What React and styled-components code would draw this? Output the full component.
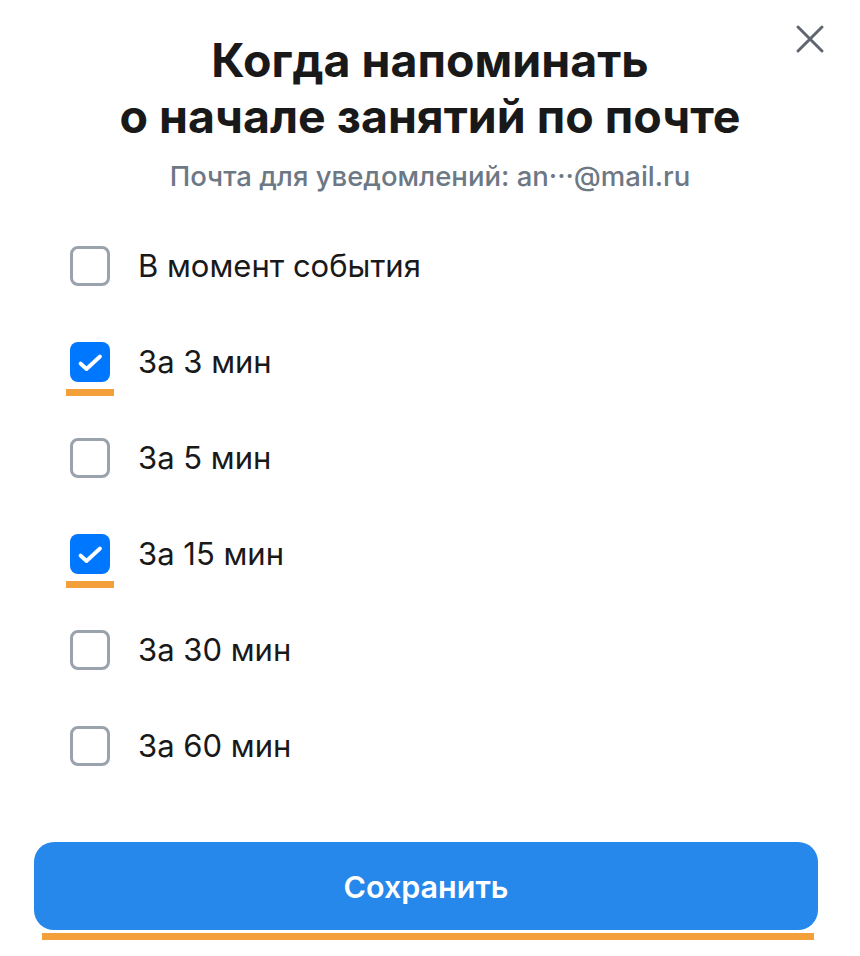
import styled, { createGlobalStyle } from 'styled-components';

const GlobalStyle = createGlobalStyle`
  html, body {
    margin: 0;
    padding: 0;
    background: #ffffff;
  }
  body {
    font-family: Inter, "Noto Sans", Roboto, sans-serif;
    -webkit-font-smoothing: antialiased;
  }
`;

const options = [
  { label: 'В момент события', checked: false },
  { label: 'За 3 мин', checked: true },
  { label: 'За 5 мин', checked: false },
  { label: 'За 15 мин', checked: true },
  { label: 'За 30 мин', checked: false },
  { label: 'За 60 мин', checked: false },
];

const CheckIcon = () => (
  <svg width="40" height="40" viewBox="0 0 40 40" fill="none">
    <path d="M10.5 21.5l6 5.5L30 14.5" stroke="#ffffff" strokeWidth="3.8" strokeLinecap="round" strokeLinejoin="round" />
  </svg>
);

const CloseIcon = () => (
  <svg width="30" height="30" viewBox="0 0 30 30" fill="none">
    <path d="M3 3l24 24M27 3L3 27" stroke="#5f6670" strokeWidth="3" strokeLinecap="round" />
  </svg>
);

export default function App() {
  return (
    <>
      <GlobalStyle />
      <Modal>
        <CloseButton aria-label="Закрыть">
          <CloseIcon />
        </CloseButton>
        <Header>
          <Title>
            Когда напоминать
            <br />
            о начале занятий по почте
          </Title>
          <Subtitle>Почта для уведомлений: an···@mail.ru</Subtitle>
        </Header>
        <OptionList>
          {options.map((o) => (
            <Option key={o.label}>
              <BoxWrap>
                <Box $checked={o.checked}>{o.checked && <CheckIcon />}</Box>
                {o.checked && <Underline $width={48} />}
              </BoxWrap>
              <Label>{o.label}</Label>
            </Option>
          ))}
        </OptionList>
        <Footer>
          <SaveButton>Сохранить</SaveButton>
          <Underline $width={772} $shift={4} />
        </Footer>
      </Modal>
    </>
  );
}

const Modal = styled.div`
  position: relative;
  width: 860px;
  height: 956px;
  box-sizing: border-box;
  padding: 32px 42px 0 34px;
  display: flex;
  flex-direction: column;
`;

const CloseButton = styled.button`
  position: absolute;
  top: 24px;
  right: 35px;
  padding: 0;
  border: none;
  background: none;
  display: flex;
`;

const Header = styled.div`
  display: flex;
  flex-direction: column;
  align-items: center;
  padding-left: 8px;
`;

const Title = styled.h1`
  margin: 0;
  font-size: 46.5px;
  line-height: 56px;
  font-weight: 700;
  letter-spacing: 0;
  color: #19191a;
  text-align: center;
`;

const Subtitle = styled.div`
  margin-top: 16px;
  font-size: 27.5px;
  line-height: 32px;
  font-weight: 500;
  color: #6d7885;
`;

const OptionList = styled.div`
  display: flex;
  flex-direction: column;
  margin-top: 26px;
  padding-left: 36px;
`;

const Option = styled.label`
  display: flex;
  align-items: center;
  height: 96px;
  gap: 28px;
`;

const BoxWrap = styled.div`
  position: relative;
  width: 40px;
  height: 40px;
`;

const Box = styled.div`
  width: 40px;
  height: 40px;
  box-sizing: border-box;
  border-radius: 8px;
  border: ${(p) => (p.$checked ? 'none' : '3px solid #99a2ad')};
  background: ${(p) => (p.$checked ? '#0077ff' : '#ffffff')};
  display: flex;
  align-items: center;
  justify-content: center;
`;

const Underline = styled.div`
  width: ${(p) => p.$width}px;
  height: 7px;
  margin-left: ${(p) => p.$shift || 0}px;
  background: #f4a03a;
  ${BoxWrap} & {
    position: absolute;
    left: -4px;
    top: 47px;
  }
`;

const Label = styled.span`
  font-size: 31px;
  line-height: 36px;
  color: #19191a;
`;

const Footer = styled.div`
  margin-top: auto;
  margin-bottom: 16px;
  display: flex;
  flex-direction: column;
  align-items: center;
  gap: 3px;
`;

const SaveButton = styled.button`
  width: 784px;
  height: 88px;
  border: none;
  border-radius: 20px;
  background: #2688eb;
  color: #ffffff;
  font-family: inherit;
  font-size: 30.5px;
  font-weight: 600;
`;
